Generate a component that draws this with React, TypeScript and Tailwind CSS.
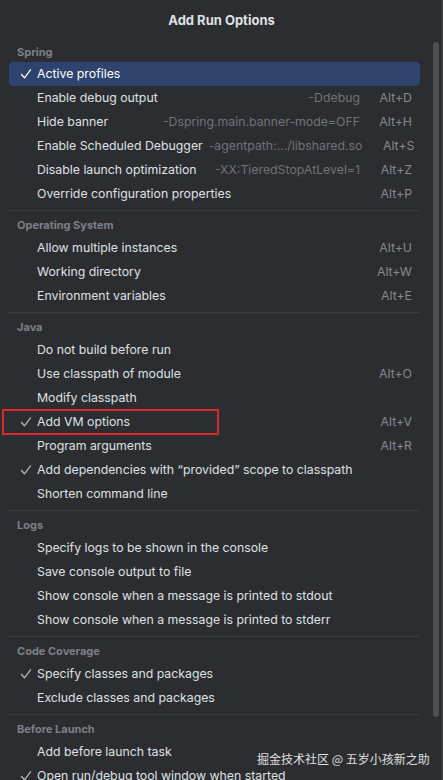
import React from "react";

type Item = { label: string; hint?: string; key?: string; checked?: boolean; selected?: boolean };
type Section = { title: string; items: Item[] };

const sections: Section[] = [
  {
    title: "Spring",
    items: [
      { label: "Active profiles", checked: true, selected: true },
      { label: "Enable debug output", hint: "-Ddebug", key: "Alt+D" },
      { label: "Hide banner", hint: "-Dspring.main.banner-mode=OFF", key: "Alt+H" },
      { label: "Enable Scheduled Debugger", hint: "-agentpath:.../libshared.so", key: "Alt+S" },
      { label: "Disable launch optimization", hint: "-XX:TieredStopAtLevel=1", key: "Alt+Z" },
      { label: "Override configuration properties", key: "Alt+P" },
    ],
  },
  {
    title: "Operating System",
    items: [
      { label: "Allow multiple instances", key: "Alt+U" },
      { label: "Working directory", key: "Alt+W" },
      { label: "Environment variables", key: "Alt+E" },
    ],
  },
  {
    title: "Java",
    items: [
      { label: "Do not build before run" },
      { label: "Use classpath of module", key: "Alt+O" },
      { label: "Modify classpath" },
      { label: "Add VM options", key: "Alt+V", checked: true },
      { label: "Program arguments", key: "Alt+R" },
      { label: "Add dependencies with \u201cprovided\u201d scope to classpath", checked: true },
      { label: "Shorten command line" },
    ],
  },
  {
    title: "Logs",
    items: [
      { label: "Specify logs to be shown in the console" },
      { label: "Save console output to file" },
      { label: "Show console when a message is printed to stdout" },
      { label: "Show console when a message is printed to stderr" },
    ],
  },
  {
    title: "Code Coverage",
    items: [
      { label: "Specify classes and packages", checked: true },
      { label: "Exclude classes and packages" },
    ],
  },
  {
    title: "Before Launch",
    items: [
      { label: "Add before launch task" },
      { label: "Open run/debug tool window when started", checked: true },
    ],
  },
];

function Check({ light }: { light?: boolean }) {
  return (
    <svg width="12" height="12" viewBox="0 0 12 12" fill="none">
      <path
        d="M1.5 6.5 L4.5 9.8 L10.5 1.8"
        stroke={light ? "#ffffff" : "#b4b7bc"}
        strokeWidth="1.3"
        strokeLinecap="round"
        strokeLinejoin="round"
      />
    </svg>
  );
}

function Row({ item }: { item: Item }) {
  return (
    <div
      className={
        "mx-[9px] w-[411px] h-[24px] flex items-center pl-[11px] pr-[8px] rounded-[4px] " +
        (item.selected ? "bg-[#2e436e] text-white" : "text-[#dfe1e5]")
      }
    >
      <span className="w-[17px] shrink-0 flex items-center">{item.checked && <Check light={item.selected} />}</span>
      <span className="flex-1 whitespace-nowrap">{item.label}</span>
      {item.hint && <span className="pl-[6px] text-[#6f737a] whitespace-nowrap">{item.hint}</span>}
      {item.key && <span className="w-[52px] shrink-0 text-right text-[#868a91] whitespace-nowrap">{item.key}</span>}
    </div>
  );
}

export default function App() {
  return (
    <div
      className="relative w-[443px] h-[780px] overflow-hidden bg-[#2b2d30] text-[12.3px]"
      style={{ fontFamily: "Inter, 'Noto Sans', sans-serif" }}
    >
      <div className="h-[42px] flex items-center justify-center text-[13px] font-bold text-[#dfe1e5]">
        Add Run Options
      </div>
      {sections.map((s, i) => (
        <div key={s.title}>
          {i > 0 && (
            <div className="py-[4px] mx-[8px] w-[412px]">
              <div className="h-px bg-[#393b40]" />
            </div>
          )}
          <div className={"flex items-center pl-[17px] text-[11px] font-bold text-[#7c8087] " + (i === 0 ? "h-[20px]" : "h-[21px]")}>
            {s.title}
          </div>
          {s.items.map((it) => (
            <Row key={it.label} item={it} />
          ))}
        </div>
      ))}

      {/* scrollbar */}
      <div className="absolute left-[433px] top-[42px] w-[6px] h-[675px] rounded-full bg-[#4e5054]" />
      <div className="absolute right-0 top-0 w-[2px] h-full bg-[#393b40]" />

      {/* annotation */}
      <div className="absolute left-[2px] top-[409px] w-[217px] h-[26px] border-2 border-[#d92b26]" />

      {/* watermark */}
      <div
        className="absolute left-[257px] top-[750px] text-[12px] text-white/85 whitespace-nowrap"
        style={{ fontFamily: "'Noto Sans CJK SC', sans-serif" }}
      >
        掘金技术社区 @ 五岁小孩新之助
      </div>
    </div>
  );
}
